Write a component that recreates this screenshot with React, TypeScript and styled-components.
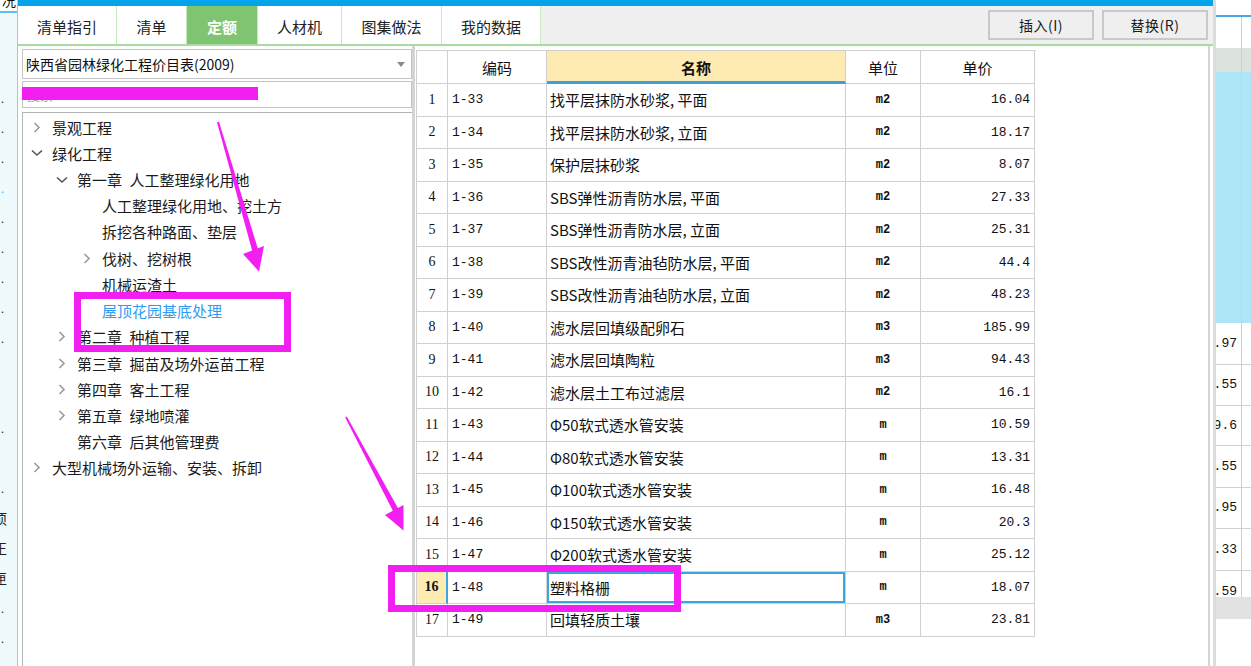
import React from 'react';
import styled, { createGlobalStyle } from 'styled-components';

const GlobalStyle = createGlobalStyle`
  html, body { margin: 0; padding: 0; background: #ffffff; }
  #root { width: 1251px; height: 666px; }
`;

const CJK = `"Noto Sans CJK SC", "Microsoft YaHei", sans-serif`;
const MONO = `"Liberation Mono", "Noto Sans CJK SC", monospace`;
const SERIF = `"Liberation Serif", "Noto Sans CJK SC", serif`;

const Screen = styled.div`
  position: relative;
  display: flex;
  width: 1251px;
  height: 666px;
  overflow: hidden;
  background: #ffffff;
  font-family: ${CJK};
  color: #111;
`;

/* --- background window, left edge --- */
const LeftStrip = styled.div`
  width: 17px;
  flex-shrink: 0;
  display: flex;
  flex-direction: column;
  background: #effafd;
`;

const StripTop = styled.div`
  height: 11px;
  background: #ffffff;
  border-bottom: 2px solid #5cc0ea;
  overflow: hidden;
  font-size: 14px;
  line-height: 14px;
  text-align: right;
  padding-right: 1px;
  span { display: block; margin-top: -7px; }
`;

const StripList = styled.div`
  padding-top: 70px;
  display: flex;
  flex-direction: column;
`;

const StripItem = styled.div<{ $cyan?: boolean; $glyph?: boolean }>`
  height: 30px;
  display: flex;
  align-items: center;
  justify-content: flex-end;
  overflow: hidden;
  white-space: nowrap;
  padding-right: ${p => (p.$glyph ? 10 : 12)}px;
  font-size: ${p => (p.$glyph ? 14 : 11)}px;
  color: ${p => (p.$cyan ? '#32b4e6' : '#222')};
  letter-spacing: ${p => (p.$glyph ? 0 : 1)}px;
`;

/* --- dialog --- */
const Dialog = styled.div`
  width: 1195px;
  flex-shrink: 0;
  display: flex;
  flex-direction: column;
  border-left: 1px solid #bdbdbd;
  border-right: 3px solid #dcdcdc;
  background: #ffffff;
`;

const TopBar = styled.div`
  height: 6px;
  background: #03a4e9;
`;

const TabRow = styled.div`
  height: 38px;
  display: flex;
  align-items: stretch;
  background: #f0f0f0;
  border-bottom: 2px solid #a9dca0;
  padding-right: 5px;
`;

const Tab = styled.div<{ $w: number; $active?: boolean }>`
  width: ${p => p.$w}px;
  box-sizing: border-box;
  display: flex;
  align-items: center;
  justify-content: center;
  padding-top: 3px;
  font-size: 15px;
  background: ${p => (p.$active ? '#7fc470' : '#ffffff')};
  color: ${p => (p.$active ? '#ffffff' : '#222')};
  font-weight: ${p => (p.$active ? 700 : 400)};
  border-right: 1px solid #c6ebbe;
`;

const Spacer = styled.div`
  flex: 1;
`;

const ActionButton = styled.div`
  width: 106px;
  height: 30px;
  margin-top: 4px;
  margin-left: 8px;
  box-sizing: border-box;
  display: flex;
  align-items: center;
  justify-content: center;
  background: #efefef;
  border: 2px solid #c9c9c9;
  font-size: 14px;
  letter-spacing: 0.5px;
  color: #1a1a1a;
`;

const Body = styled.div`
  flex: 1;
  display: flex;
  min-height: 0;
  padding-right: 3px;
`;

/* --- left panel --- */
const LeftPanel = styled.div`
  width: 394px;
  flex-shrink: 0;
  box-sizing: border-box;
  padding: 3px 0 0 4px;
  display: flex;
  flex-direction: column;
`;

const Select = styled.div`
  height: 30px;
  box-sizing: border-box;
  border: 1px solid #c4c4c4;
  display: flex;
  align-items: center;
  padding: 0 6px 0 3px;
  font-size: 14px;
  color: #111;
  span { flex: 1; }
`;

const Search = styled.div`
  height: 27px;
  margin-top: 2px;
  box-sizing: border-box;
  border: 1px solid #c4c4c4;
  display: flex;
  align-items: center;
  padding-left: 4px;
  font-size: 13px;
  color: #9a9a9a;
`;

const Tree = styled.div`
  flex: 1;
  margin-top: 4px;
  border-left: 1px solid #b4b4b4;
  border-top: 1px solid #b4b4b4;
  padding-top: 1px;
`;

const TreeRow = styled.div<{ $depth: number; $link?: boolean }>`
  height: 26.23px;
  display: flex;
  align-items: center;
  padding-left: ${p => 7 + p.$depth * 25}px;
  font-size: 15px;
  white-space: pre;
  color: ${p => (p.$link ? '#2f9cf0' : '#1b1b1b')};
`;

const Caret = styled.span`
  width: 14px;
  margin-right: 8px;
  display: flex;
  align-items: center;
  justify-content: center;
`;

/* --- table panel --- */
const TablePanel = styled.div`
  flex: 1;
  border-left: 3px solid #d4d4d4;
  border-right: 2px solid #d4d4d4;
  padding: 4px 0 0 1px;
`;

const Grid = styled.div`
  width: 619px;
  border-left: 1px solid #d0d0d0;
  border-top: 1px solid #d0d0d0;
`;

const Line = styled.div<{ $head?: boolean }>`
  display: grid;
  grid-template-columns: 31px 99px 299px 75px 114px;
  height: ${p => (p.$head ? 33 : 32.5)}px;
`;

const HeadCell = styled.div<{ $accent?: boolean }>`
  display: flex;
  align-items: center;
  justify-content: center;
  box-sizing: border-box;
  border-right: 1px solid #d0d0d0;
  border-bottom: ${p => (p.$accent ? '3px solid #3aa2da' : '1px solid #d0d0d0')};
  background: ${p => (p.$accent ? '#feebb4' : '#ffffff')};
  font-weight: ${p => (p.$accent ? 700 : 400)};
  font-size: 15px;
  line-height: 1;
  padding-top: ${p => (p.$accent ? 2 : 0)}px;
`;

const NumCell = styled.div<{ $current?: boolean }>`
  display: flex;
  align-items: center;
  justify-content: center;
  box-sizing: border-box;
  border-right: ${p => (p.$current ? '2px solid #3aa6dc' : '1px solid #d0d0d0')};
  border-bottom: 1px solid #d0d0d0;
  background: ${p => (p.$current ? '#feebb4' : '#ffffff')};
  font-family: ${SERIF};
  font-weight: ${p => (p.$current ? 700 : 400)};
  font-size: 14px;
`;

const Cell = styled.div<{ $align?: 'left' | 'center' | 'right'; $mono?: boolean; $small?: boolean; $selected?: boolean }>`
  display: flex;
  align-items: center;
  justify-content: ${p => (p.$align === 'right' ? 'flex-end' : p.$align === 'center' ? 'center' : 'flex-start')};
  box-sizing: border-box;
  padding: 0 4px 0 ${p => (p.$mono ? 4 : 3)}px;
  border-right: 1px solid #d0d0d0;
  border-bottom: 1px solid #d0d0d0;
  font-family: ${p => (p.$mono ? MONO : CJK)};
  font-size: ${p => (p.$small ? 12 : p.$mono ? 13 : 15)}px;
  font-weight: ${p => (p.$small ? 700 : 400)};
  white-space: nowrap;
  box-shadow: ${p => (p.$selected ? 'inset 0 0 0 2px #3aa6dc' : 'none')};
`;

/* --- background window, right edge --- */
const RightStrip = styled.div`
  flex: 1;
  display: flex;
  flex-direction: column;
  background: #ffffff;
`;

const RTop = styled.div`
  height: 15px;
  border-bottom: 2px solid #4aaae0;
`;

const RRow = styled.div<{ $h: number; $bg?: string; $line?: boolean }>`
  height: ${p => p.$h}px;
  flex-shrink: 0;
  display: grid;
  grid-template-columns: 26px 1fr;
  background: ${p => p.$bg || '#ffffff'};
  box-sizing: border-box;
  border-bottom: ${p => (p.$line ? '1px solid #d0d0d0' : 'none')};
  overflow: hidden;
`;

const RCell = styled.div<{ $padTop?: number }>`
  border-right: 1px solid #d0d0d0;
  display: flex;
  align-items: ${p => (p.$padTop ? 'flex-start' : 'center')};
  justify-content: flex-end;
  padding: ${p => p.$padTop || 0}px 4px 0 0;
  font-family: ${MONO};
  font-size: 13px;
  white-space: nowrap;
`;

const RFill = styled.div`
  flex: 1;
`;

const Overlay = styled.svg`
  position: absolute;
  left: 0;
  top: 0;
  pointer-events: none;
`;

const ChevronRight = () => (
  <svg width="8" height="11" viewBox="0 0 8 11">
    <polyline points="1.5,1 6,5.5 1.5,10" fill="none" stroke="#9b9b9b" strokeWidth="1.6" />
  </svg>
);

const ChevronDown = () => (
  <svg width="12" height="8" viewBox="0 0 12 8">
    <polyline points="1,1.5 6,6 11,1.5" fill="none" stroke="#555" strokeWidth="1.6" />
  </svg>
);

const SP = '\u2002';

type Node = { label: string; depth: number; caret?: 'right' | 'down'; link?: boolean };

const tree: Node[] = [
  { label: '景观工程', depth: 0, caret: 'right' },
  { label: '绿化工程', depth: 0, caret: 'down' },
  { label: `第一章${SP}人工整理绿化用地`, depth: 1, caret: 'down' },
  { label: '人工整理绿化用地、挖土方', depth: 2 },
  { label: '拆挖各种路面、垫层', depth: 2 },
  { label: '伐树、挖树根', depth: 2, caret: 'right' },
  { label: '机械运渣土', depth: 2 },
  { label: '屋顶花园基底处理', depth: 2, link: true },
  { label: `第二章${SP}种植工程`, depth: 1, caret: 'right' },
  { label: `第三章${SP}掘苗及场外运苗工程`, depth: 1, caret: 'right' },
  { label: `第四章${SP}客土工程`, depth: 1, caret: 'right' },
  { label: `第五章${SP}绿地喷灌`, depth: 1, caret: 'right' },
  { label: `第六章${SP}后其他管理费`, depth: 1 },
  { label: '大型机械场外运输、安装、拆卸', depth: 0, caret: 'right' },
];

const rows: [string, string, string, string][] = [
  ['1-33', '找平层抹防水砂浆, 平面', 'm2', '16.04'],
  ['1-34', '找平层抹防水砂浆, 立面', 'm2', '18.17'],
  ['1-35', '保护层抹砂浆', 'm2', '8.07'],
  ['1-36', 'SBS弹性沥青防水层, 平面', 'm2', '27.33'],
  ['1-37', 'SBS弹性沥青防水层, 立面', 'm2', '25.31'],
  ['1-38', 'SBS改性沥青油毡防水层, 平面', 'm2', '44.4'],
  ['1-39', 'SBS改性沥青油毡防水层, 立面', 'm2', '48.23'],
  ['1-40', '滤水层回填级配卵石', 'm3', '185.99'],
  ['1-41', '滤水层回填陶粒', 'm3', '94.43'],
  ['1-42', '滤水层土工布过滤层', 'm2', '16.1'],
  ['1-43', 'Φ50软式透水管安装', 'm', '10.59'],
  ['1-44', 'Φ80软式透水管安装', 'm', '13.31'],
  ['1-45', 'Φ100软式透水管安装', 'm', '16.48'],
  ['1-46', 'Φ150软式透水管安装', 'm', '20.3'],
  ['1-47', 'Φ200软式透水管安装', 'm', '25.12'],
  ['1-48', '塑料格栅', 'm', '18.07'],
  ['1-49', '回填轻质土壤', 'm3', '23.81'],
];

const stripItems: { text: string; cyan?: boolean; glyph?: boolean }[] = [
  { text: '...' }, { text: '..' }, { text: '..' }, { text: '..', cyan: true }, { text: '..' },
  { text: '..' }, { text: '..' }, { text: '..' }, { text: '..' }, { text: '' }, { text: '' },
  { text: '..' }, { text: '' }, { text: '.' },
  { text: '项', glyph: true }, { text: '正', glyph: true }, { text: '匣', glyph: true },
  { text: '....' }, { text: '....' },
];

const tabs = [
  { label: '清单指引', w: 99 },
  { label: '清单', w: 70 },
  { label: '定额', w: 71, active: true },
  { label: '人材机', w: 84 },
  { label: '图集做法', w: 100 },
  { label: '我的数据', w: 99 },
];

const sideValues = ['.97', '.55', '9.6', '.55', '.95', '.33'];

const MAGENTA = '#f21ff0';

const App = () => (
  <>
    <GlobalStyle />
    <Screen>
      <LeftStrip>
        <StripTop><span>况</span></StripTop>
        <StripList>
          {stripItems.map((s, i) => (
            <StripItem key={i} $cyan={s.cyan} $glyph={s.glyph}>{s.text}</StripItem>
          ))}
        </StripList>
      </LeftStrip>

      <Dialog>
        <TopBar />
        <TabRow>
          {tabs.map(t => (
            <Tab key={t.label} $w={t.w} $active={t.active}>{t.label}</Tab>
          ))}
          <Spacer />
          <ActionButton>插入(I)</ActionButton>
          <ActionButton>替换(R)</ActionButton>
        </TabRow>

        <Body>
          <LeftPanel>
            <Select>
              <span>陕西省园林绿化工程价目表(2009)</span>
              <svg width="8" height="5" viewBox="0 0 8 5">
                <polygon points="0,0 8,0 4,5" fill="#8a8a8a" />
              </svg>
            </Select>
            <Search>搜索</Search>
            <Tree>
              {tree.map(n => (
                <TreeRow key={n.label} $depth={n.depth} $link={n.link}>
                  <Caret>
                    {n.caret === 'right' && <ChevronRight />}
                    {n.caret === 'down' && <ChevronDown />}
                  </Caret>
                  {n.label}
                </TreeRow>
              ))}
            </Tree>
          </LeftPanel>

          <TablePanel>
            <Grid>
              <Line $head>
                <HeadCell />
                <HeadCell>编码</HeadCell>
                <HeadCell $accent>名称</HeadCell>
                <HeadCell>单位</HeadCell>
                <HeadCell>单价</HeadCell>
              </Line>
              {rows.map(([code, name, unit, price], i) => {
                const current = i === 15;
                return (
                  <Line key={code}>
                    <NumCell $current={current}>{i + 1}</NumCell>
                    <Cell $mono>{code}</Cell>
                    <Cell $selected={current}>{name}</Cell>
                    <Cell $align="center" $mono $small>{unit}</Cell>
                    <Cell $align="right" $mono>{price}</Cell>
                  </Line>
                );
              })}
            </Grid>
          </TablePanel>
        </Body>
      </Dialog>

      <RightStrip>
        <RTop />
        <RRow $h={31}><RCell /></RRow>
        <RRow $h={24} $bg="#dce3df"><RCell /></RRow>
        <RRow $h={251} $bg="#aee6f8"><RCell /></RRow>
        {sideValues.map((v, i) => (
          <RRow key={i} $h={i === 2 ? 40 : 41.5} $line><RCell>{v}</RCell></RRow>
        ))}
        <RRow $h={26}><RCell $padTop={13}>.59</RCell></RRow>
        <RRow $h={22} $bg="#e2e2e2" />
        <RFill />
      </RightStrip>

      <Overlay width="1251" height="666" viewBox="0 0 1251 666">
        <rect x="22" y="87" width="236" height="13" fill={MAGENTA} />
        <rect x="77.5" y="295.5" width="210" height="53" fill="none" stroke={MAGENTA} strokeWidth="7" />
        <rect x="391.5" y="568.5" width="286" height="40" fill="none" stroke={MAGENTA} strokeWidth="7" />
        <polygon points="217,122.3 219,121.7 261,259 255,261" fill={MAGENTA} />
        <polygon points="243,254 264,246 259,271.5" fill={MAGENTA} />
        <polygon points="345.2,417.4 346.8,416.6 399,510 394,513" fill={MAGENTA} />
        <polygon points="385,515 403.5,505 403.5,530.5" fill={MAGENTA} />
      </Overlay>
    </Screen>
  </>
);

export default App;
